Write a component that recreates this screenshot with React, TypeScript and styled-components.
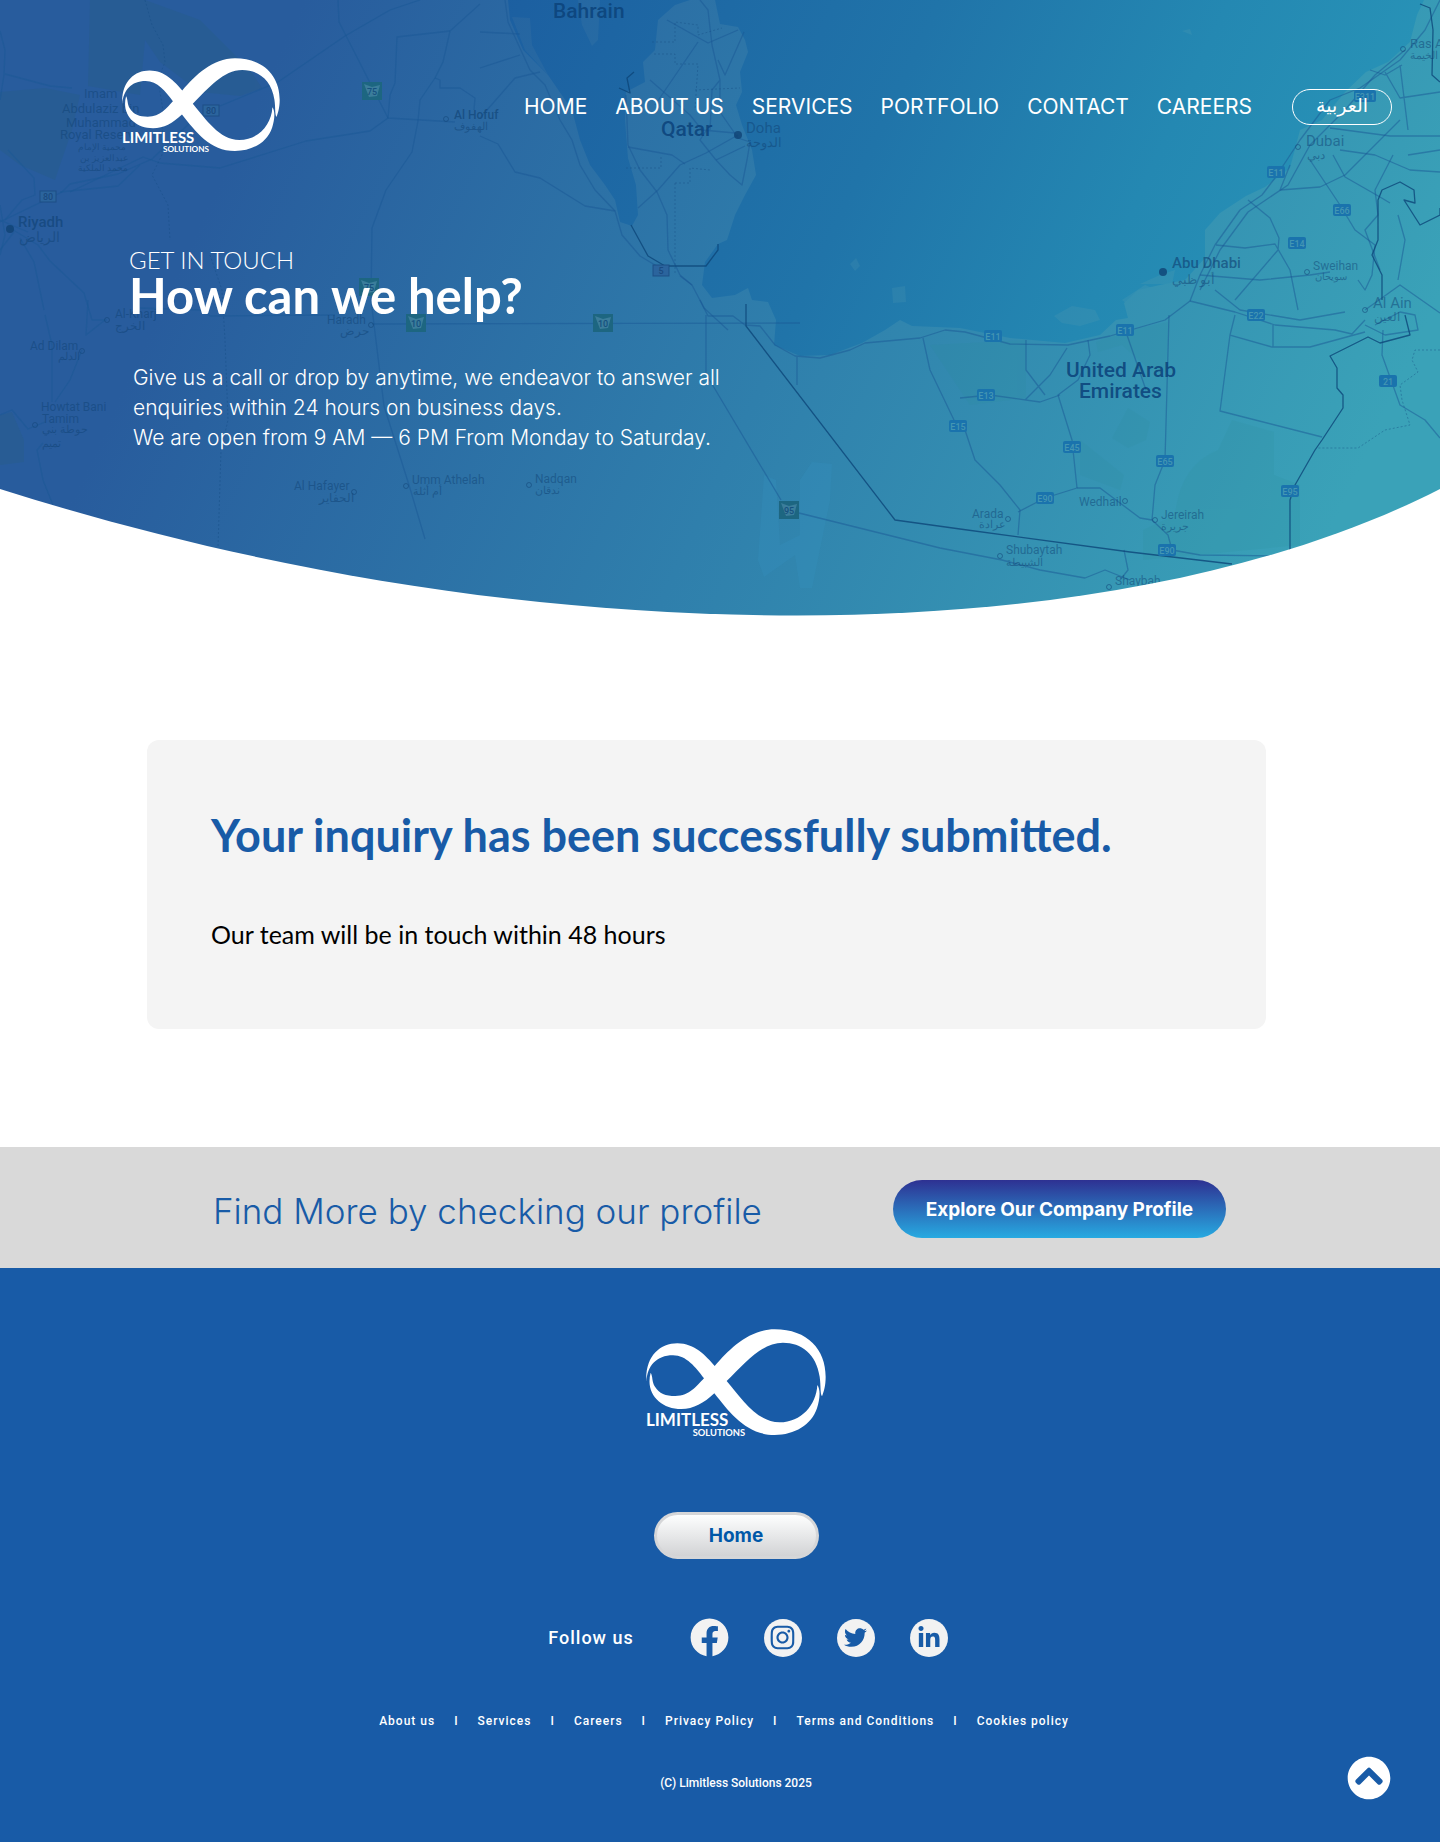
import React from "react";
import styled, { createGlobalStyle } from "styled-components";
import { FaChevronCircleUp, FaFacebook, FaInstagram, FaLinkedinIn, FaTwitter } from "react-icons/fa";

const wide = `Inter, "Liberation Sans", sans-serif`;
const soft = `Lato, "Open Sans", sans-serif`;
const plain = `Roboto, "Liberation Sans", sans-serif`;
const blue = "#185ba7";

const GlobalStyle = createGlobalStyle`
  *, *::before, *::after { box-sizing: border-box; }
  body { margin: 0; background: #fff; font-family: ${wide}; }
  h1, h2, p, ul { margin: 0; padding: 0; }
  ul { list-style: none; }
  a { color: inherit; text-decoration: none; }
`;

/* ---------- logo ---------- */

const LogoSvg = styled.svg<{ $width: number }>`
  display: block;
  width: ${(p) => p.$width}px;
  height: auto;
  fill: #fff;
  font-family: ${soft};
  font-weight: 700;
`;

function Logo({ width }: { width: number }) {
  return (
    <LogoSvg $width={width} viewBox="49 57 540 323" role="img" aria-label="Limitless Solutions">
      <path
        d="M50 215C46 140 90 100 143 100C195 100 229 138 255 168C300 116 358 58 435 58
           C535 58 588 120 588 200C588 228 582 246 577 259C571 250 574 228 570 200
           C560 132 515 98 460 98C395 98 345 160 291 213C335 265 382 337 450 337
           C515 337 560 285 563 225C574 240 570 270 562 295C545 345 495 375 435 375
           C350 375 300 308 254 250C222 280 192 297 155 297C92 297 46 250 63 188
           C70 200 66 215 76 230C88 250 108 258 137 258C180 258 202 227 223 205
           C198 172 170 136 130 136C80 136 53 168 50 215Z"
      />
      <text x="49" y="348" fontSize="51">LIMITLESS</text>
      <text x="189" y="378" fontSize="28">SOLUTIONS</text>
    </LogoSvg>
  );
}

/* ---------- map artwork ---------- */

const MapSvg = styled.svg`
  grid-area: 1 / 1;
  display: block;
  width: 100%;
  height: auto;
  font-family: ${plain};
`;

const seaPath =
  "M508 0L510 20L523 50L548 75L572 110L580 140L590 165L605 185L615 200L620 222L632 226L638 215L636 185L628 158L625 120L626 92L645 82L643 62L655 50L658 20L675 5L690 0H715L720 24L738 27L745 40L748 52L740 72L742 92L736 105L742 125L752 150L756 175L745 195L735 215L727 240L718 244L705 262L702 285L712 298L735 295L748 288L752 300L768 302L776 320L774 345L800 356L830 355L862 343L885 330L900 320L912 326L960 328L1010 338L1065 343L1100 335L1116 320L1128 318L1124 303L1138 290L1160 285L1185 280L1205 258L1205 230L1220 213L1246 196L1265 187L1290 168L1300 130L1322 120L1345 92L1366 72L1388 62L1410 42L1417 15L1424 0Z";

const landPatches = [
  "M578 0L582 25L592 46L598 40L600 0Z",
  "M512 17L530 18L532 45L548 75L525 50Z",
  "M1054 316L1072 306L1095 310L1100 320L1080 326L1062 323Z",
  "M1122 300L1145 285L1162 292L1150 308L1130 306Z",
  "M1140 284L1160 275L1175 270L1172 284Z",
  "M1182 31L1190 29L1192 35Z",
  "M850 264L856 258L860 266L855 271Z",
  "M892 288L905 286L906 302L893 303Z",
];

const sandPatches = [
  "M1168 322L1166 372L1150 370L1122 345L1098 352L1096 342L1130 330Z",
  "M1128 408L1150 422L1146 440L1128 448L1112 438Z",
  "M1080 440L1124 475L1120 490L1080 475Z",
  "M1232 420L1274 432V475L1300 485V545L1143 560V530L1175 515Q1180 465 1218 450Z",
  "M930 345L1026 340V398L970 405Z",
];

const reserves = [
  "M90 0H145L200 20L250 70L262 88L240 96L200 92L160 62L145 40L140 95L88 86Z",
  "M0 92L45 88L80 95L72 130L60 165L55 180L20 165L0 150Z",
  "M0 415L12 412L24 440L24 462L0 465Z",
];

const lightPatches = [
  "M764 475L776 480L780 545L800 535L800 480L812 462L832 464L830 500L812 588L800 588L795 555L764 577L758 560Z",
];

const roads = [
  "M338 0L339 22L388 118L455 122",
  "M480 4L450 31L448 40L443 62L435 78L420 100L418 121L412 152L386 190L372 228L371 300L384 406L409 485L425 539",
  "M450 31L397 37L395 83L390 95L388 118",
  "M435 78L440 80V88H460L475 98L474 110",
  "M420 0L390 10L345 36L278 82L220 106M195 118L152 159L118 174L70 184L62 192L0 222",
  "M388 118L370 131L306 141L220 168L160 163L143 157L70 192",
  "M60 192L118 186L140 165",
  "M10 228L38 245L50 261L84 293L92 320L107 320",
  "M5 220L22 200L35 195L34 178L8 150",
  "M14 232L0 250M20 238L34 262L44 310",
  "M0 31L5 50L4 75L0 100M5 74L50 86L72 88",
  "M45 315L52 345L52 402M82 350L70 380L55 402M43 443L37 450L43 480L53 505",
  "M88 300L86 335L105 320M140 308L200 310L210 316L335 315M372 324L800 323",
  "M0 415L12 410L28 429L45 422",
  "M0 205L5 235L0 255M0 220L28 232",
  "M505 0L508 22L530 70L545 85L560 120L572 140L580 165L595 190L615 211",
  "M480 32L520 34M480 68L520 55M480 118L515 78L540 72",
  "M480 136L498 144L515 172L540 178L585 206L615 211L622 235L640 256L660 268",
  "M700 0L708 10L712 45L720 80L712 90L710 130M720 80L720 112L738 138L750 142L747 160L742 185L730 175L716 160L700 140L710 125",
  "M738 135L706 153L680 165L658 190L638 208",
  "M667 20L708 43L738 30M698 42L655 105M744 32L725 75L718 60",
  "M626 95L628 145L640 170L657 192L667 215L668 250L680 275L692 285",
  "M628 147L672 155L685 164M650 80L690 115L702 130L735 133M716 160L745 146",
  "M680 276L692 285L704 308L728 330",
  "M700 300L708 316L733 316L745 325L760 326L775 345L795 356L820 358L850 350L865 343L920 338L945 330L965 332L1010 344L1068 345L1110 336L1165 320L1190 301",
  "M706 315V374L781 500M799 513L940 548L1002 560L1040 570L1085 578L1105 570L1130 580",
  "M923 338L930 370L954 420M797 357V385",
  "M1190 301L1200 275L1215 245L1240 210L1262 195L1275 178L1300 140L1330 100L1360 88L1400 60L1425 30L1440 0",
  "M1200 290L1220 250L1248 212L1288 185L1310 145L1345 110L1375 75L1405 50",
  "M1290 165L1280 190L1320 187L1345 175L1400 120",
  "M1310 160L1340 205L1355 230L1375 245L1372 275L1365 290L1358 280",
  "M1216 245L1245 248L1275 244L1290 270L1298 310M1248 200L1270 218L1279 238L1278 250L1235 300",
  "M1330 128L1345 130L1390 136H1440M1340 150L1375 155L1410 170L1440 172",
  "M1333 155L1345 177L1380 197L1390 203",
  "M1393 155L1375 190L1378 215L1365 230L1380 270M1408 155L1440 150",
  "M1370 70L1385 75L1402 65M1385 72L1400 98L1440 92M1400 65L1408 130",
  "M1200 275L1260 280L1310 275L1330 272M1215 290L1240 310L1300 320L1345 312",
  "M1190 301L1235 312L1275 325L1335 330L1352 334L1365 320",
  "M1169 315L1165 460L1155 485L1152 520",
  "M1088 340L1090 355L1078 380L1058 395L1072 440L1077 488",
  "M1067 348L1050 375L1025 400M1026 340V370L1045 395M960 398L990 395L1040 402L1060 395",
  "M1127 335L1146 390M965 430L975 460L1000 485L1020 510L1018 535",
  "M1077 488L1100 488L1140 518L1152 520L1168 535L1172 550L1200 555L1280 556",
  "M1018 512L1045 498L1077 488M1124 550L1128 570L1120 580",
  "M1235 315L1230 335L1220 411L1322 437M1230 335L1272 347H1310L1365 332M1273 325V347",
  "M1383 330L1382 355L1400 405L1425 420L1440 438M1398 215L1405 240L1398 280M1365 310L1400 285L1440 313",
  "M1365 325L1385 335L1418 330L1415 315L1400 312L1375 325",
];

const borders = [
  "M631 225L648 256L665 266L706 266L718 250V244",
  "M746 304V326L895 520L960 529L1130 552L1232 564",
  "M1420 4L1430 8L1433 30L1432 75L1440 82",
  "M1440 208L1440 215L1420 225L1404 200L1415 203L1414 190L1400 182L1382 190L1378 200V240L1372 255L1382 275V300",
  "M1405 315L1410 335L1380 343L1368 337L1330 356L1337 368V388L1343 395V408L1322 440L1315 450L1295 485L1290 500V550",
  "M619 88L630 93L627 78L634 72",
];

const dotted = [
  "M145 0L152 25L163 45L165 62L158 80L163 110L162 155L152 175L168 205L170 240",
  "M210 255L222 290L225 340L228 420L221 450L218 548",
  "M652 42H675V22L698 25V35L722 28M654 54H675V64H698L695 110M695 90L740 88",
  "M626 168H661V155M675 183V275M675 183H690V168L710 170",
  "M1440 350H1415L1412 360L1418 372L1400 385L1402 400L1410 425L1385 430L1358 448H1318",
];

type Place = [string, number, number, number, string?];
const places: Place[] = [
  ["Imam", 84, 98, 13],
  ["Abdulaziz bin", 62, 113, 13],
  ["Muhammad", 66, 127, 13],
  ["Royal Reserve", 60, 139, 13],
  ["محمية الإمام", 78, 150, 9],
  ["عبدالعزيز بن", 80, 161, 9],
  ["محمد الملكية", 78, 171, 9],
  ["Riyadh", 18, 227, 15, "m"],
  ["الرياض", 19, 242, 14],
  ["Al Hofuf", 454, 119, 12, "m"],
  ["الهفوف", 454, 130, 11],
  ["Doha", 746, 133, 15],
  ["الدوحة", 746, 147, 13],
  ["Al-Kharj", 115, 318, 12],
  ["الخرج", 115, 330, 12],
  ["Ad Dilam", 30, 350, 12],
  ["الدلم", 58, 360, 11],
  ["Howtat Bani", 41, 411, 12],
  ["Tamim", 42, 423, 12],
  ["حوطة بني", 42, 433, 11],
  ["تميم", 42, 447, 11],
  ["Haradh", 327, 324, 12],
  ["حرض", 340, 335, 12],
  ["Al Hafayer", 294, 490, 12],
  ["الحفاير", 319, 502, 12],
  ["Umm Athelah", 412, 484, 12],
  ["أم أثلة", 413, 495, 11],
  ["Nadqan", 535, 483, 12],
  ["ندقان", 535, 494, 11],
  ["Ras Al", 1410, 48, 13],
  ["الخيمة", 1410, 59, 11],
  ["Dubai", 1306, 146, 15],
  ["دبي", 1307, 159, 12],
  ["Abu Dhabi", 1172, 268, 15, "m"],
  ["أبو ظبي", 1172, 284, 13],
  ["Sweihan", 1313, 270, 12],
  ["سويحان", 1315, 280, 10],
  ["Al Ain", 1373, 308, 15],
  ["العين", 1374, 321, 12],
  ["Wedhail", 1079, 506, 12],
  ["Arada", 972, 518, 12],
  ["عرادة", 979, 528, 11],
  ["Jereirah", 1161, 519, 12],
  ["جريرة", 1161, 530, 11],
  ["Shubaytah", 1006, 554, 12],
  ["الشبيطة", 1006, 566, 11],
  ["Shaybah", 1115, 585, 12],
];

const dots: [number, number][] = [
  [446, 119], [107, 320], [82, 351], [35, 425], [371, 325], [354, 492], [406, 486], [529, 485],
  [1403, 49], [1298, 147], [1365, 310], [1307, 272], [1125, 501], [1008, 519], [1155, 520],
  [1000, 556], [1109, 587],
];

const capitals: [number, number][] = [[10, 229], [738, 135], [1163, 272]];

const shields: [string, number, number][] = [
  ["E311", 1365, 96], ["E11", 1276, 172], ["E66", 1342, 210], ["E14", 1297, 243], ["E22", 1256, 315],
  ["E11", 1125, 330], ["E11", 993, 336], ["E13", 986, 395], ["E15", 958, 426], ["E45", 1072, 447],
  ["E65", 1165, 461], ["E90", 1045, 498], ["E95", 1290, 491], ["E90", 1167, 550], ["21", 1388, 381],
];

const greenShields: [string, number, number][] = [
  ["75", 372, 91], ["75", 369, 287], ["10", 416, 323], ["10", 603, 323], ["95", 789, 510],
];

const boxShields: [string, number, number][] = [["80", 211, 110], ["80", 48, 196], ["5", 661, 270]];

function MapArt() {
  return (
    <MapSvg viewBox="0 0 1440 616" aria-hidden="true">
      <defs>
        <linearGradient id="land" gradientUnits="userSpaceOnUse" x1="250" y1="115" x2="1299" y2="601">
          <stop offset="0" stopColor="#285c9d" />
          <stop offset="0.5" stopColor="#2f7fac" />
          <stop offset="1" stopColor="#3aa2b8" />
        </linearGradient>
        <linearGradient id="sea" gradientUnits="userSpaceOnUse" x1="346" y1="160" x2="1299" y2="601">
          <stop offset="0" stopColor="#1b5b9f" />
          <stop offset="0.45" stopColor="#2074a9" />
          <stop offset="0.7" stopColor="#2488b2" />
          <stop offset="0.9" stopColor="#2893b7" />
        </linearGradient>
        <clipPath id="heroEdge">
          <path d="M0 0H1440V489C1275 573 1050 615.5 797 615.5C520 615.5 250 568 0 489Z" />
        </clipPath>
      </defs>
      <g clipPath="url(#heroEdge)">
        <rect width="1440" height="616" fill="url(#land)" />
        <g fill="#2c8c98" opacity="0.14">
          {sandPatches.map((d) => <path key={d} d={d} />)}
        </g>
        <g fill="#275c84" opacity="0.35">
          {reserves.map((d) => <path key={d} d={d} />)}
        </g>
        <g fill="#3a9ccc" opacity="0.16">
          {lightPatches.map((d) => <path key={d} d={d} />)}
        </g>
        <path d={seaPath} fill="url(#sea)" />
        <g fill="url(#land)" opacity="0.7">
          {landPatches.map((d) => <path key={d} d={d} />)}
        </g>
        <g fill="none" strokeLinejoin="round">
          <g stroke="#1a5796" strokeOpacity="0.5" strokeWidth="1.3">
            {roads.map((d) => <path key={d} d={d} />)}
          </g>
          <g stroke="#0d4679" strokeOpacity="0.8" strokeWidth="1.3">
            {borders.map((d) => <path key={d} d={d} />)}
          </g>
          <g stroke="#154a82" strokeOpacity="0.4" strokeDasharray="2 2">
            {dotted.map((d) => <path key={d} d={d} />)}
          </g>
        </g>
        <g fontSize="9" textAnchor="middle" fontWeight="500">
          {shields.map(([label, x, y], i) => (
            <g key={i}>
              <rect x={x - (label.length > 3 ? 11 : 9)} y={y - 6} width={label.length > 3 ? 22 : 18} height="12" rx="2" fill="#1a73ad" />
              <text x={x} y={y + 4} fill="#4496b3">{label}</text>
            </g>
          ))}
          {greenShields.map(([label, x, y], i) => (
            <g key={i}>
              <rect x={x - 10} y={y - 9} width="20" height="18" fill="#1d6681" />
              <path d={`M${x - 8} ${y - 7}L${x} ${y - 4}L${x + 8} ${y - 6}L${x + 5} ${y + 5}L${x - 3} ${y + 6}Z`} fill="#3b7d9b" />
              <text x={x} y={y + 4} fill="#15507f">{label}</text>
            </g>
          ))}
          {boxShields.map(([label, x, y], i) => (
            <g key={i}>
              <rect x={x - 8} y={y - 5} width="16" height="11" fill="#2b649d" stroke="#1a4a80" strokeOpacity="0.8" />
              <text x={x} y={y + 4} fill="#1a4a80">{label}</text>
            </g>
          ))}
        </g>
        <g fill="none" stroke="#134678" strokeOpacity="0.55">
          {dots.map(([x, y], i) => <circle key={i} cx={x} cy={y} r="2.5" />)}
        </g>
        <g fill="#0f4274" opacity="0.8">
          {capitals.map(([x, y], i) => <circle key={i} cx={x} cy={y} r="4" />)}
        </g>
        <g fill="#0f4274">
          {places.map(([name, x, y, size, weight], i) => (
            <text key={i} x={x} y={y} fontSize={size} fontWeight={weight ? 500 : 400} fillOpacity={weight ? 0.65 : 0.5}>
              {name}
            </text>
          ))}
        </g>
        <g fill="#0c447c" fillOpacity="0.9" fontWeight="500" fontSize="21">
          <text x="553" y="18">Bahrain</text>
          <text x="661" y="136">Qatar</text>
          <text x="1066" y="377">United Arab</text>
          <text x="1079" y="398">Emirates</text>
        </g>
      </g>
    </MapSvg>
  );
}

/* ---------- hero ---------- */

const Hero = styled.div`
  display: grid;
  color: #fff;
`;

const HeroContent = styled.div`
  grid-area: 1 / 1;
`;

const Header = styled.header`
  display: flex;
  align-items: center;
  justify-content: space-between;
  padding: 58px 48px 0 122px;
`;

const HeaderRight = styled.div`
  display: flex;
  align-items: center;
  gap: 40px;
  padding-top: 4px;
`;

const Nav = styled.nav`
  display: flex;
  gap: 28px;
`;

const NavLink = styled.a`
  font-size: 21px;
  line-height: 28px;
  font-weight: 400;
`;

const LanguageButton = styled.button`
  width: 100px;
  height: 36px;
  padding: 0 0 4px;
  border: 1px solid #fff;
  border-radius: 18px;
  background: transparent;
  color: #fff;
  font-family: "Noto Sans", "DejaVu Sans", sans-serif;
  font-size: 19px;
  line-height: 28px;
`;

const Intro = styled.section`
  padding: 92px 48px 0 129px;
`;

const Eyebrow = styled.p`
  font-family: ${soft};
  font-size: 24px;
  line-height: 30px;
  font-weight: 300;
`;

const HeroTitle = styled.h1`
  font-family: ${soft};
  font-size: 49px;
  line-height: 40px;
  font-weight: 700;
`;

const HeroText = styled.p`
  margin-top: 48px;
  padding-left: 4px;
  font-size: 21px;
  line-height: 30px;
  font-weight: 300;
`;

/* ---------- confirmation ---------- */

const Main = styled.main`
  padding: 124px 174px 118px 147px;
`;

const Card = styled.section`
  padding: 67px 64px 79px;
  border-radius: 12px;
  background: #f4f4f4;
  font-family: ${soft};
`;

const CardTitle = styled.h2`
  font-size: 45px;
  line-height: 56px;
  font-weight: 700;
  color: ${blue};
`;

const CardText = styled.p`
  margin-top: 55px;
  font-size: 25px;
  line-height: 32px;
  color: #000;
`;

/* ---------- profile band ---------- */

const Band = styled.section`
  display: flex;
  align-items: center;
  justify-content: space-between;
  padding: 33px 214px 30px 213px;
  background: #d9d9d9;
`;

const BandText = styled.p`
  padding-top: 4px;
  font-size: 35px;
  line-height: 40px;
  font-weight: 300;
  color: ${blue};
`;

const ProfileButton = styled.button`
  width: 333px;
  height: 58px;
  border: 0;
  border-radius: 29px;
  background: linear-gradient(#2e3192, #27aae1);
  color: #fff;
  font-family: inherit;
  font-size: 19px;
  font-weight: 700;
`;

/* ---------- footer ---------- */

const Footer = styled.footer`
  position: relative;
  display: flex;
  flex-direction: column;
  align-items: center;
  padding: 61px 0 50px 32px;
  background: ${blue};
  color: #fff;
  font-family: ${plain};
`;

const HomeButton = styled.button`
  width: 165px;
  height: 47px;
  margin-top: 75px;
  border: 3px solid #d5d6d8;
  border-radius: 24px;
  background: linear-gradient(#fdfefe, #d2d3d5);
  color: #0058a8;
  font-family: ${wide};
  font-size: 19px;
  font-weight: 700;
`;

const Follow = styled.div`
  display: flex;
  align-items: center;
  gap: 57px;
  margin-top: 60px;
  padding-left: 24px;
  font-size: 18px;
  line-height: 24px;
  font-weight: 500;
  letter-spacing: 1px;
`;

const SocialList = styled.ul`
  display: flex;
  gap: 35px;
`;

const SocialLink = styled.a<{ $solid?: boolean }>`
  display: flex;
  align-items: center;
  justify-content: center;
  width: 38px;
  height: 38px;
  border-radius: 50%;
  background: ${(p) => (p.$solid ? "transparent" : "#f2f2f2")};
  color: ${(p) => (p.$solid ? "#f2f2f2" : blue)};

  svg {
    flex: none;
  }
`;

const FooterLinks = styled.nav`
  display: flex;
  gap: 19px;
  margin-top: 54px;
  padding-right: 24px;
  font-size: 12px;
  line-height: 20px;
  font-weight: 500;
  letter-spacing: 1px;
`;

const Copyright = styled.p`
  margin-top: 42px;
  font-size: 12px;
  line-height: 20px;
  font-weight: 500;
`;

const TopButton = styled.button`
  position: absolute;
  right: 49px;
  bottom: 43px;
  display: flex;
  padding: 0;
  border: 0;
  border-radius: 50%;
  background: transparent;
  color: #fff;
`;

const navItems = ["HOME", "ABOUT US", "SERVICES", "PORTFOLIO", "CONTACT", "CAREERS"];
const footerItems = ["About us", "Services", "Careers", "Privacy Policy", "Terms and Conditions", "Cookies policy"];

export default function App() {
  return (
    <>
      <GlobalStyle />
      <Hero>
        <MapArt />
        <HeroContent>
          <Header>
            <a href="#home"><Logo width={158} /></a>
            <HeaderRight>
              <Nav aria-label="Main">
                {navItems.map((item) => <NavLink key={item} href="#">{item}</NavLink>)}
              </Nav>
              <LanguageButton type="button" lang="ar">العربية</LanguageButton>
            </HeaderRight>
          </Header>
          <Intro>
            <Eyebrow>GET IN TOUCH</Eyebrow>
            <HeroTitle>How can we help?</HeroTitle>
            <HeroText>
              Give us a call or drop by anytime, we endeavor to answer all<br />
              enquiries within 24 hours on business days.<br />
              We are open from 9 AM — 6 PM From Monday to Saturday.
            </HeroText>
          </Intro>
        </HeroContent>
      </Hero>
      <Main>
        <Card>
          <CardTitle>Your inquiry has been successfully submitted.</CardTitle>
          <CardText>Our team will be in touch within 48 hours</CardText>
        </Card>
      </Main>
      <Band>
        <BandText>Find More by checking our profile</BandText>
        <ProfileButton type="button">Explore Our Company Profile</ProfileButton>
      </Band>
      <Footer>
        <Logo width={180} />
        <HomeButton type="button">Home</HomeButton>
        <Follow>
          <span>Follow us</span>
          <SocialList>
            <li><SocialLink href="#" aria-label="Facebook" $solid><FaFacebook size={39} /></SocialLink></li>
            <li><SocialLink href="#" aria-label="Instagram"><FaInstagram size={27} /></SocialLink></li>
            <li><SocialLink href="#" aria-label="Twitter"><FaTwitter size={23} /></SocialLink></li>
            <li><SocialLink href="#" aria-label="LinkedIn"><FaLinkedinIn size={24} /></SocialLink></li>
          </SocialList>
        </Follow>
        <FooterLinks aria-label="Footer">
          {footerItems.map((item, i) => (
            <React.Fragment key={item}>
              {i > 0 && <span aria-hidden="true">I</span>}
              <a href="#">{item}</a>
            </React.Fragment>
          ))}
        </FooterLinks>
        <Copyright>(C) Limitless Solutions 2025</Copyright>
        <TopButton type="button" aria-label="Back to top"><FaChevronCircleUp size={44} /></TopButton>
      </Footer>
    </>
  );
}
